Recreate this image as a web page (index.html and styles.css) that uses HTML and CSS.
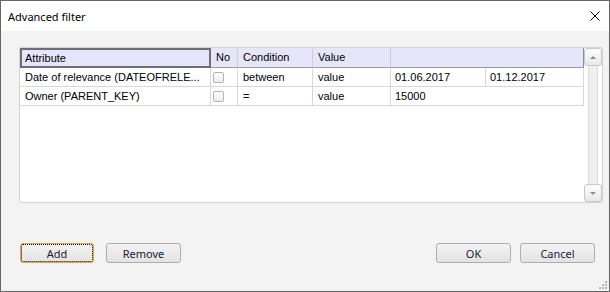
FILE: index.html
```html
<!DOCTYPE html>
<html>
<head>
    <title>Advanced filter</title>
    <link rel="stylesheet" href="styles.css">
</head>
<body>
    <div class="window">
        <div class="titlebar">
            <span class="title">Advanced filter</span>
            <svg class="close" width="10" height="10" viewBox="0 0 10 10">
                <path d="M0.5 0.5 L9.5 9.5 M9.5 0.5 L0.5 9.5" stroke="#000" stroke-width="1" fill="none"/>
            </svg>
        </div>

        <div class="content">
            <div class="panel">
                <div class="grid">
                    <div class="cell head active">Attribute</div>
                    <div class="cell head">No</div>
                    <div class="cell head">Condition</div>
                    <div class="cell head">Value</div>
                    <div class="cell head last"></div>

                    <div class="cell">Date of relevance (DATEOFRELE...</div>
                    <div class="cell check"><span class="checkbox"></span></div>
                    <div class="cell">between</div>
                    <div class="cell">value</div>
                    <div class="cell narrow">01.06.2017</div>
                    <div class="cell narrow">01.12.2017</div>

                    <div class="cell">Owner (PARENT_KEY)</div>
                    <div class="cell check"><span class="checkbox"></span></div>
                    <div class="cell">=</div>
                    <div class="cell">value</div>
                    <div class="cell narrow wide">15000</div>
                </div>

                <div class="scrollbar">
                    <div class="sb-btn"><span class="arrow-up"></span></div>
                    <div class="sb-track"></div>
                    <div class="sb-btn"><span class="arrow-down"></span></div>
                </div>
            </div>

            <div class="buttons">
                <div class="group left">
                    <button class="btn small focused">Add</button>
                    <button class="btn">Remove</button>
                </div>
                <div class="group right">
                    <button class="btn">OK</button>
                    <button class="btn">Cancel</button>
                </div>
            </div>
        </div>

        <!-- resize grip -->
        <svg class="grip" width="8" height="8" viewBox="0 0 8 8">
            <rect x="6" y="0" width="2" height="2" fill="#b5b5b5"/>
            <rect x="3" y="3" width="2" height="2" fill="#b5b5b5"/>
            <rect x="6" y="3" width="2" height="2" fill="#b5b5b5"/>
            <rect x="0" y="6" width="2" height="2" fill="#b5b5b5"/>
            <rect x="3" y="6" width="2" height="2" fill="#b5b5b5"/>
            <rect x="6" y="6" width="2" height="2" fill="#b5b5b5"/>
        </svg>
    </div>
</body>
</html>
```

FILE: styles.css
```css
body {
    margin: 0;
    font-family: "Liberation Sans", Arial, sans-serif;
}

.window {
    position: relative;
    width: 610px;
    height: 292px;
    box-sizing: border-box;
    border: 1px solid #666;
    background-color: #f3f3f3;
    display: flex;
    flex-direction: column;
}

.titlebar {
    height: 30px;
    background-color: #fff;
    display: flex;
    align-items: center;
    justify-content: space-between;
    padding: 0 9px 0 7px;
    font-family: "Noto Sans", sans-serif;
    font-size: 11px;
    color: #000;
}

.content {
    flex: 1;
    display: flex;
    flex-direction: column;
    padding: 16px 14px 0 18px;
}

.panel {
    width: 584px;
    height: 156px;
    box-sizing: border-box;
    border: 1px solid #d2d2d2;
    border-radius: 2px;
    background-color: #fff;
    display: flex;
    justify-content: space-between;
}

.grid {
    display: grid;
    grid-template-columns: 191px 27px 75px 78px 95px 98px;
    grid-template-rows: 20px 19px 19px;
    width: 564px;
    align-self: flex-start;
}

.cell {
    box-sizing: border-box;
    border-right: 1px solid #d8d8d8;
    border-bottom: 1px solid #d8d8d8;
    padding-left: 5px;
    font-size: 11px;
    line-height: 18px;
    color: #000;
    white-space: nowrap;
    overflow: hidden;
}

.cell.narrow {
    padding-left: 4px;
}

.cell.wide {
    grid-column: span 2;
}

.cell.check {
    padding-left: 2px;
    display: flex;
    align-items: center;
}

.checkbox {
    width: 11px;
    height: 11px;
    box-sizing: border-box;
    border: 1px solid #b4b4b4;
    border-radius: 2px;
    background: linear-gradient(#fff, #ededed);
}

.head {
    background-color: #e6e6fa;
    border-right-color: #cdcddc;
    border-bottom-color: #9c9c9c;
    line-height: 19px;
}

.head.active {
    border: 2px solid #6e6e78;
    padding-left: 3px;
    line-height: 16px;
}

.head.last {
    grid-column: span 2;
    border-right-color: #8e8e8e;
}

.scrollbar {
    width: 18px;
    display: flex;
    flex-direction: column;
}

.sb-btn {
    height: 18px;
    box-sizing: border-box;
    border: 1px solid #c8c8c8;
    border-radius: 3px;
    background: linear-gradient(#fdfdfd, #e8e8e8);
    display: flex;
    align-items: center;
    justify-content: center;
}

.sb-track {
    flex: 1;
    margin: 0 4px;
    background-color: #efefef;
    border-left: 1px solid #dadada;
    border-right: 1px solid #dadada;
}

.arrow-up {
    width: 0;
    height: 0;
    border-left: 3px solid transparent;
    border-right: 3px solid transparent;
    border-bottom: 3px solid #8c8c8c;
}

.arrow-down {
    width: 0;
    height: 0;
    border-left: 3px solid transparent;
    border-right: 3px solid transparent;
    border-top: 3px solid #8c8c8c;
}

.buttons {
    margin-top: 40px;
    padding-left: 1px;
    display: flex;
    justify-content: space-between;
}

.group {
    display: flex;
}

.group.left {
    gap: 12px;
}

.group.right {
    gap: 9px;
}

.btn {
    width: 75px;
    height: 20px;
    box-sizing: border-box;
    border: 1px solid #adadad;
    border-radius: 3px;
    background: linear-gradient(#f3f3f3, #e3e3e3);
    font-family: "Noto Sans", sans-serif;
    font-size: 11px;
    color: #1c1c30;
    padding: 0;
}

.btn.small {
    width: 74px;
}

.btn.focused {
    border-color: #eaa23a;
    outline: 1px dotted #000;
    outline-offset: -2px;
}

.grip {
    position: absolute;
    right: 2px;
    bottom: 2px;
}
```
